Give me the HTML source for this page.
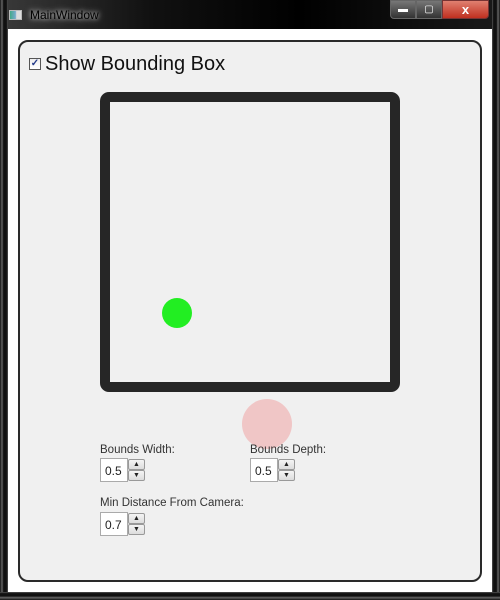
<!DOCTYPE html>
<html><head><style>
*{margin:0;padding:0;box-sizing:border-box}
body{width:500px;height:600px;background:#111;position:relative;overflow:hidden;font-family:"Liberation Sans",sans-serif}
.abs{position:absolute}
.lbl{position:absolute;font-size:11.5px;color:#333}
.spin{position:absolute;width:46px;height:24px}
.spin .tb{position:absolute;left:0;top:0;width:28px;height:24px;background:#fff;border:1px solid #aaa;font-size:12px;color:#222;padding:5px 0 0 4px}
.spin .b{position:absolute;left:28px;width:17px;height:11px;background:linear-gradient(#f4f4f4,#dcdcdc);border:1px solid #999;border-radius:2px;font-size:7px;text-align:center;line-height:9px;color:#222}
</style></head><body>
<div class="abs" style="left:0;top:0;width:500px;height:29px;background:linear-gradient(90deg,#3a3a3a,#111 30%,#000 60%,#1a1a1a)"></div>
<div class="abs" style="left:0;top:0;width:8px;height:600px;background:linear-gradient(90deg,#111,#666 25%,#111 45%,#111 80%,#555)"></div>
<div class="abs" style="right:0;top:0;width:8px;height:600px;background:linear-gradient(90deg,#555,#111 20%,#111 55%,#666 75%,#111)"></div>
<div class="abs" style="left:0;bottom:0;width:500px;height:8px;background:linear-gradient(#555,#111 20%,#111 50%,#666 70%,#111)"></div>
<div class="abs" style="left:9px;top:10px;width:13px;height:10px;background:linear-gradient(90deg,#4a8 0,#7ac 50%,#ddd 60%);border:1px solid #bbb"></div>
<div class="abs" style="left:30px;top:8px;font-size:12px;color:#000;text-shadow:0 0 4px #ccc,0 0 8px #aaa">MainWindow</div>
<div class="abs" style="left:390px;top:0;width:26px;height:19px;border:1px solid #666;border-radius:0 0 0 4px;background:linear-gradient(#777,#333);color:#fff;font-size:10px;text-align:center;line-height:18px">▬</div>
<div class="abs" style="left:416px;top:0;width:26px;height:19px;border:1px solid #666;background:linear-gradient(#777,#333);color:#fff;font-size:10px;text-align:center;line-height:17px">▢</div>
<div class="abs" style="left:442px;top:0;width:47px;height:19px;border:1px solid #733;border-radius:0 0 4px 0;background:linear-gradient(#e08070,#c03020);color:#fff;font-size:13px;font-weight:bold;text-align:center;line-height:18px">x</div>
<div class="abs" style="left:8px;top:29px;width:484px;height:563px;background:#fff"></div>
<div class="abs" style="left:18px;top:40px;width:464px;height:542px;background:#f0f0f0;border:2px solid #2a2a2a;border-radius:10px"></div>
<div class="abs" style="left:29px;top:58px;width:12px;height:12px;border:1px solid #555;background:linear-gradient(#eee,#fff);font-size:10px;color:#223a88;line-height:10px;text-align:center;font-weight:bold">✓</div>
<div class="abs" style="left:45px;top:53px;font-size:20px;color:#111">Show Bounding Box</div>
<div class="abs" style="left:100px;top:92px;width:300px;height:300px;border:10px solid #262626;border-radius:9px"></div>
<div class="abs" style="left:162px;top:298px;width:30px;height:30px;border-radius:50%;background:#22ee22"></div>
<div class="abs" style="left:242px;top:399px;width:50px;height:50px;border-radius:50%;background:rgba(240,180,180,0.7)"></div>
<div class="lbl" style="left:100px;top:444px">Bounds Width:</div>
<div class="spin" style="left:100px;top:458px"><div class="tb">0.5</div><div class="b" style="top:1px">▲</div><div class="b" style="top:12px">▼</div></div>
<div class="lbl" style="left:250px;top:444px">Bounds Depth:</div>
<div class="spin" style="left:250px;top:458px"><div class="tb">0.5</div><div class="b" style="top:1px">▲</div><div class="b" style="top:12px">▼</div></div>
<div class="lbl" style="left:100px;top:497px">Min Distance From Camera:</div>
<div class="spin" style="left:100px;top:512px"><div class="tb">0.7</div><div class="b" style="top:1px">▲</div><div class="b" style="top:12px">▼</div></div>
</body></html>
